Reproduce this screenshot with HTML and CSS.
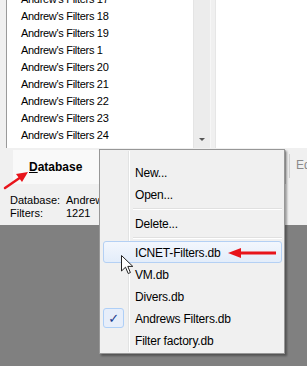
FILE: index.html
```html
<!DOCTYPE html>
<html lang="en">
<head>
  <meta charset="UTF-8" />
  <title>Filters database</title>
  <link rel="stylesheet" href="styles.css">
</head>
<body>

<div class="window">
  <div class="top">
    <div class="list">
      <div class="items">
        <div class="row">Andrew's Filters 17</div>
        <div class="row">Andrew's Filters 18</div>
        <div class="row">Andrew's Filters 19</div>
        <div class="row">Andrew's Filters 1</div>
        <div class="row">Andrew's Filters 20</div>
        <div class="row">Andrew's Filters 21</div>
        <div class="row">Andrew's Filters 22</div>
        <div class="row">Andrew's Filters 23</div>
        <div class="row">Andrew's Filters 24</div>
        <div class="row">Andrew's Filters 25</div>
      </div>
      <div class="scroll"><span class="down"></span></div>
    </div>
    <div class="side"></div>
  </div>

  <div class="bar">
    <div class="db-panel"><span class="db-btn"><u>D</u>atabase</span></div>
    <div class="edit-btn">Edit</div>
  </div>

  <div class="info">
    <span>Database:</span><span>Andrews Filters.db</span>
    <span>Filters:</span><span>1221</span>
  </div>
</div>

<!-- menu Database -->
<div class="menu">
  <div class="item">New...</div>
  <div class="item">Open...</div>
  <div class="sep"></div>
  <div class="item">Delete...</div>
  <div class="sep"></div>
  <div class="item hover">ICNET-Filters.db</div>
  <div class="item">VM.db</div>
  <div class="item">Divers.db</div>
  <div class="item checked"><span class="check">✓</span>Andrews Filters.db</div>
  <div class="item">Filter factory.db</div>
</div>

<svg class="arrow-left" width="34" height="26" viewBox="0 0 34 26">
  <line x1="3" y1="22" x2="19" y2="11" stroke="#e8141b" stroke-width="2.5" stroke-linecap="round"/>
  <polygon points="26,6 14,8 20,16" fill="#e8141b"/>
</svg>

<svg class="arrow-right" width="50" height="12" viewBox="0 0 50 12">
  <line x1="10" y1="6" x2="48" y2="6" stroke="#e8141b" stroke-width="3"/>
  <polygon points="0,6 13,1 13,11" fill="#e8141b"/>
</svg>

<svg class="cursor" width="13" height="20" viewBox="0 0 13 20">
  <path d="M0.5,0.5 L0.5,16 L4.5,12.2 L7.2,18.5 L9.4,17.6 L6.8,11.4 L11.8,11.4 Z" fill="#ffffff" stroke="#222" stroke-width="1" stroke-linejoin="round"/>
</svg>

</body>
</html>
```

FILE: styles.css
```css
* { box-sizing: border-box; }
body {
  margin: 0;
  width: 307px;
  height: 366px;
  overflow: hidden;
  position: relative;
  background-color: #808080;
  font-family: 'Liberation Sans', Arial, sans-serif;
  color: #000;
}
.window {
  height: 225px;
  background-color: #f0f0f0;
  overflow: hidden;
}
.top {
  display: flex;
  height: 148px;
}
.list {
  display: flex;
  flex-shrink: 0;
  margin-left: 6px;
  width: 205px;
  background: #fff;
  border-left: 1px solid #9a9a9a;
}
.items {
  flex: 1;
  overflow: hidden;
  padding-left: 14px;
  font-size: 11px;
  letter-spacing: -0.3px;
}
.row {
  height: 17px;
  line-height: 17px;
  white-space: nowrap;
}
.row:first-child { margin-top: -9px; }
.scroll {
  width: 18px;
  background: #ececec;
  border-left: 1px solid #e4e4e4;
  border-right: 1px solid #f7f7f7;
  position: relative;
}
.down {
  position: absolute;
  left: 5px;
  bottom: 7px;
  border-left: 3px solid transparent;
  border-right: 3px solid transparent;
  border-top: 3px solid #555;
}
.side {
  flex: 1;
  margin-left: 4px;
  background: #fff;
  border-left: 1px solid #e6e6e6;
}
.bar {
  display: flex;
  margin-top: 2px;
  height: 34px;
}
.db-panel {
  flex-shrink: 0;
  margin-left: 13px;
  width: 273px;
  background: #f9f9f9;
  border-right: 1px solid #c9c9c9;
  display: flex;
  align-items: center;
  padding-left: 16px;
}
.db-btn {
  font-size: 12px;
  font-weight: bold;
}
.edit-btn {
  flex-shrink: 0;
  margin: 4px 0 0 3px;
  padding: 4px 0 0 6px;
  height: 24px;
  font-size: 12px;
  color: #8a8a8a;
  border-left: 1px solid #d0d0d0;
  white-space: nowrap;
}
.info {
  display: grid;
  grid-template-columns: 56px auto;
  width: 99px;
  overflow: hidden;
  padding-left: 10px;
  margin-top: 10px;
  font-size: 11px;
  line-height: 13px;
  white-space: nowrap;
}

/* popup menu */
.menu {
  position: absolute;
  left: 99px;
  top: 149px;
  width: 186px;
  padding: 11px 2px 2px 3px;
  background: #f0f0f0;
  border: 1px solid #979797;
  box-shadow: 2px 2px 2px rgba(0,0,0,0.35);
  font-size: 12px;
  letter-spacing: -0.2px;
}
.menu::before {
  content: '';
  position: absolute;
  left: 28px;
  top: 1px;
  bottom: 1px;
  width: 1px;
  background: #e2e3e3;
  box-shadow: 1px 0 0 #fff;
}
.item {
  position: relative;
  height: 22px;
  line-height: 22px;
  padding-left: 31px;
  border: 1px solid transparent;
  border-radius: 3px;
}
.item.hover {
  background: linear-gradient(#f3f7fd, #e3edfa);
  border-color: #b4d0f4;
}
.sep {
  height: 7px;
  margin-left: 30px;
  position: relative;
}
.sep::after {
  content: '';
  position: absolute;
  left: 0;
  right: 0;
  top: 3px;
  border-top: 1px solid #e0e0e0;
  border-bottom: 1px solid #fff;
}
.check {
  position: absolute;
  left: -1px;
  top: 0;
  width: 21px;
  height: 20px;
  line-height: 20px;
  text-align: center;
  background: #e7eefa;
  border: 1px solid #aecff7;
  border-radius: 3px;
  color: #1b3a8a;
  font-family: 'DejaVu Sans', sans-serif;
  font-size: 13px;
}

.arrow-left {
  position: absolute;
  left: 2px;
  top: 166px;
}
.arrow-right {
  position: absolute;
  left: 228px;
  top: 247px;
}
.cursor {
  position: absolute;
  left: 121px;
  top: 255px;
}
```
